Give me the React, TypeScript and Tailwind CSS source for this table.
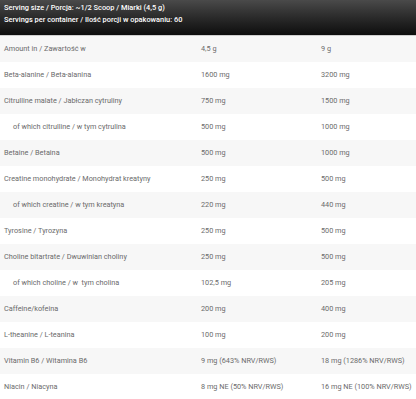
const rows: [string, string, string, boolean?][] = [
  ["Amount in / Zawartość w", "4,5 g", "9 g"],
  ["Beta-alanine / Beta-alanina", "1600 mg", "3200 mg"],
  ["Citrulline malate / Jabłczan cytruliny", "750 mg", "1500 mg"],
  ["of which citrulline / w tym cytrulina", "500 mg", "1000 mg", true],
  ["Betaine / Betaina", "500 mg", "1000 mg"],
  ["Creatine monohydrate / Monohydrat kreatyny", "250 mg", "500 mg"],
  ["of which creatine / w tym kreatyna", "220 mg", "440 mg", true],
  ["Tyrosine / Tyrozyna", "250 mg", "500 mg"],
  ["Choline bitartrate / Dwuwinian choliny", "250 mg", "500 mg"],
  ["of which choline / w  tym cholina", "102,5 mg", "205 mg", true],
  ["Caffeine/kofeina", "200 mg", "400 mg"],
  ["L-theanine / L-teanina", "100 mg", "200 mg"],
  ["Vitamin B6 / Witamina B6", "9 mg (643% NRV/RWS)", "18 mg (1286% NRV/RWS)"],
  ["Niacin / Niacyna", "8 mg NE (50% NRV/RWS)", "16 mg NE (100% NRV/RWS)"],
]

export default function App() {
  return (
    <div className="w-[416px] h-[399px] overflow-hidden bg-white font-['Roboto',sans-serif]">
      <div className="h-[33px] bg-gradient-to-b from-[#4a4a4a] to-[#0e0e0e] px-[4px] pt-[2px] text-[7.4px] leading-[12px] font-medium text-white border-b border-[#cfcfcf] box-content">
        <p>Serving size / Porcja: ~1/2 Scoop / Miarki (4,5 g)</p>
        <p>Servings per container / Ilość porcji w opakowaniu: 60</p>
      </div>
      <div>
        {rows.map(([name, a, b, sub], i) => (
          <div
            key={i}
            className={`flex items-center h-[26px] text-[7.3px] text-[#6b6b6b] ${i % 2 === 0 ? "bg-[#f7f7f7]" : "bg-white"}`}
          >
            <div className={`w-[200px] shrink-0 whitespace-pre ${sub ? "pl-[13px]" : "pl-[4px]"}`}>{name}</div>
            <div className="w-[120px] shrink-0 pl-[1px]">{a}</div>
            <div className="flex-1 pl-[1px]">{b}</div>
          </div>
        ))}
      </div>
    </div>
  )
}
